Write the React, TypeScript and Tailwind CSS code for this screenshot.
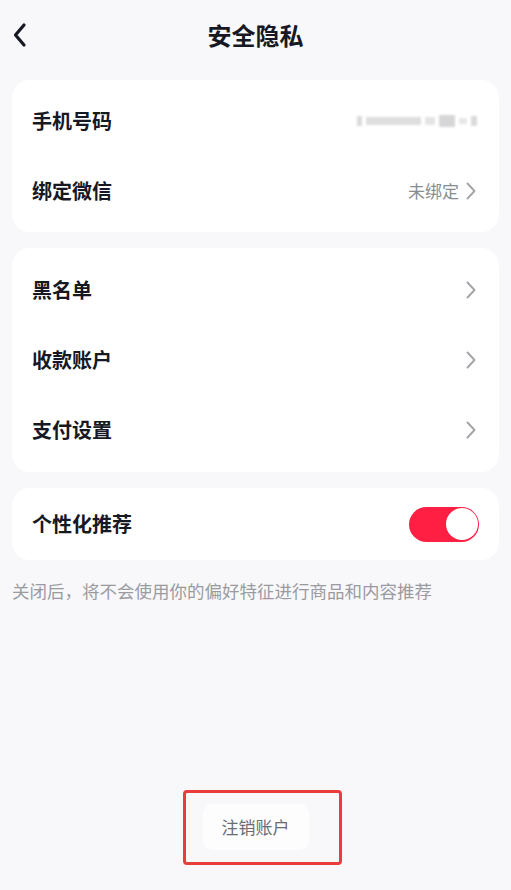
import React, { useState } from "react";

const font = {
  fontFamily: '"Noto Sans CJK SC", "Noto Sans", sans-serif',
};

function Chevron() {
  return (
    <svg width="12" height="18" viewBox="0 0 12 18" fill="none" className="shrink-0">
      <path d="M2.5 1.5 L9.5 9 L2.5 16.5" stroke="#a3a3a8" strokeWidth="1.9" strokeLinecap="round" strokeLinejoin="round" />
    </svg>
  );
}

type RowProps = {
  label: string;
  right?: React.ReactNode;
  arrow?: boolean;
};

function Row({ label, right, arrow }: RowProps) {
  return (
    <div className="flex h-[70px] items-center justify-between pl-[20px] pr-[22px]">
      <span className="text-[20px] font-bold text-[#161823]">{label}</span>
      <div className="flex items-center gap-[6px]">
        {right}
        {arrow && <Chevron />}
      </div>
    </div>
  );
}

function BlurredPhone() {
  return (
    <div className="flex items-center gap-[4px] blur-[1px] opacity-80">
      <div className="h-[10px] w-[5px] bg-[#d2d2d4]" />
      <div className="h-[8px] w-[55px] bg-[#d6d6d8]" />
      <div className="h-[8px] w-[10px] bg-[#dedee0]" />
      <div className="h-[12px] w-[16px] bg-[#cdcdcf]" />
      <div className="h-[6px] w-[8px] bg-[#e2e2e4]" />
      <div className="h-[10px] w-[6px] bg-[#d2d2d4]" />
    </div>
  );
}

function Toggle() {
  const [on, setOn] = useState(true);
  return (
    <button
      onClick={() => setOn(!on)}
      className={`flex h-[35px] w-[70px] items-center rounded-full p-[1.5px] ${on ? "justify-end bg-[#fe1f43]" : "justify-start bg-[#e0e0e3]"}`}
    >
      <span className="block h-[32px] w-[32px] rounded-full bg-white" />
    </button>
  );
}

export default function App() {
  return (
    <div className="relative flex min-h-[890px] flex-col bg-[#f8f8fa]" style={font}>
      {/* Header */}
      <div className="relative flex h-[70px] items-center justify-center">
        <button className="absolute left-[10px] top-[20px] p-[2px]" aria-label="返回">
          <svg width="16" height="26" viewBox="0 0 16 26" fill="none">
            <path d="M12 3 L3.5 13 L12 23" stroke="#161823" strokeWidth="3.2" strokeLinecap="round" strokeLinejoin="round" />
          </svg>
        </button>
        <h1 className="text-[24px] font-bold text-[#161823]">安全隐私</h1>
      </div>

      <div className="flex flex-col gap-[16px] px-[12px] pt-[10px]">
        <div className="rounded-[18px] bg-white py-[6px]">
          <Row label="手机号码" right={<BlurredPhone />} />
          <Row
            label="绑定微信"
            arrow
            right={<span className="text-[17px] text-[#8a8b91]">未绑定</span>}
          />
        </div>

        <div className="rounded-[18px] bg-white py-[7px]">
          <Row label="黑名单" arrow />
          <Row label="收款账户" arrow />
          <Row label="支付设置" arrow />
        </div>

        <div className="flex h-[72px] items-center justify-between rounded-[18px] bg-white pl-[20px] pr-[20px]">
          <span className="text-[20px] font-bold text-[#161823]">个性化推荐</span>
          <Toggle />
        </div>
      </div>

      <p className="px-[12px] pt-[18px] text-[17.5px] text-[#9a9ba1]">
        关闭后，将不会使用你的偏好特征进行商品和内容推荐
      </p>

      <div className="flex-1" />

      <div className="flex justify-center pb-[40px]">
        <button className="flex h-[46px] w-[106px] items-center justify-center rounded-[10px] bg-[#fdfdfe] text-[17px] text-[#6b6c72]">
          注销账户
        </button>
      </div>

      {/* annotation frame */}
      <div className="pointer-events-none absolute left-[183px] top-[790px] h-[75px] w-[159px] rounded-[4px] border-[3px] border-[#ec3b3b]" />
    </div>
  );
}
